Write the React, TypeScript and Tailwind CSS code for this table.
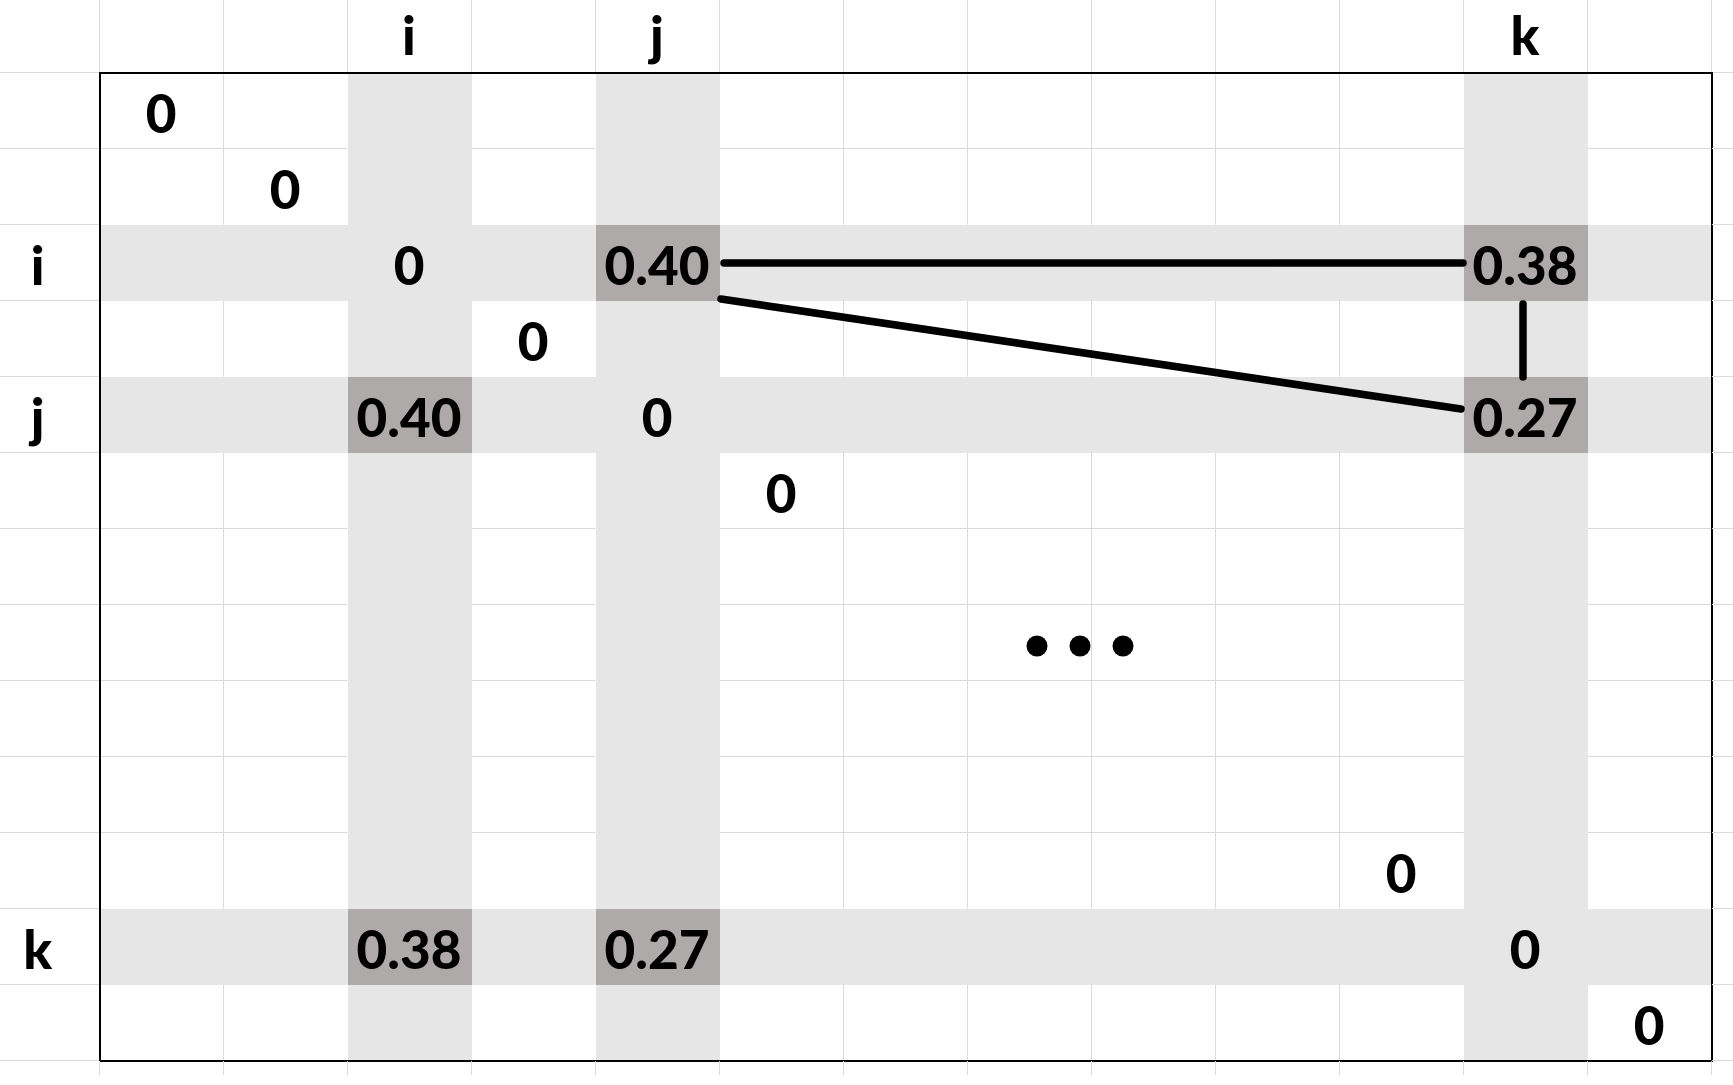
import React from 'react'

const N = 13
const idx = Array.from({ length: N }, (_, i) => i)
const marked = [2, 4, 11]
const names: Record<number, string> = { 2: 'i', 4: 'j', 11: 'k' }
const diag = [0, 1, 2, 3, 4, 5, 10, 11, 12]
const pairs: Record<string, string> = {
  '2-4': '0.40',
  '2-11': '0.38',
  '4-2': '0.40',
  '4-11': '0.27',
  '11-2': '0.38',
  '11-4': '0.27',
}

type Fill = 'none' | 'light' | 'dark'

const fillOf = (r: number, c: number): Fill => {
  if (pairs[`${r}-${c}`]) return 'dark'
  if (marked.includes(r) || marked.includes(c)) return 'light'
  return 'none'
}

const bgClass: Record<Fill, string> = {
  none: 'bg-white',
  light: 'bg-[#e6e6e6]',
  dark: 'bg-[#aeaaaa]',
}

const Cell = ({ r, c }: { r: number; c: number }) => {
  const f = fillOf(r, c)
  const lineRight = c < N - 1 && f === 'none' && fillOf(r, c + 1) === 'none'
  const lineBottom = r < N - 1 && f === 'none' && fillOf(r + 1, c) === 'none'
  const text = pairs[`${r}-${c}`] ?? (r === c && diag.includes(r) ? '0' : '')
  return (
    <div
      className={`flex items-center justify-center pt-[3px] border-r border-b ${bgClass[f]} ${
        lineRight ? 'border-r-[#dadada]' : 'border-r-transparent'
      } ${lineBottom ? 'border-b-[#dadada]' : 'border-b-transparent'}`}
    >
      {text}
    </div>
  )
}

const Links = () => (
  <svg className="absolute inset-0 pointer-events-none" width={1733} height={1085} viewBox="0 0 1733 1085">
    <g stroke="#000" strokeWidth={7.5} strokeLinecap="round">
      <line x1={724} y1={263} x2={1463} y2={263} />
      <line x1={721} y1={299} x2={1461} y2={409} />
      <line x1={1523} y1={304} x2={1523} y2={377} />
    </g>
    <g fill="#000">
      <circle cx={1037} cy={646} r={10.5} />
      <circle cx={1080} cy={646} r={10.5} />
      <circle cx={1123} cy={646} r={10.5} />
    </g>
  </svg>
)

export default function App() {
  return (
    <div className="relative w-[1733px] h-[1085px] overflow-hidden bg-white text-black font-['Lato','Noto_Sans',sans-serif] font-black text-[53px] leading-none">
      <div className="grid grid-cols-[99.5px_1612px_1fr] grid-rows-[73px_988px_14px]">
        {/* corner */}
        <div className="border-r border-b border-[#dadada]" />

        {/* column labels */}
        <div className="grid grid-cols-[repeat(13,124px)]">
          {idx.map((c) => (
            <div key={c} className="flex items-center justify-center pb-[4px] border-r border-[#dadada]">
              {names[c] ?? ''}
            </div>
          ))}
        </div>

        <div className="border-b border-[#dadada]" />

        {/* row labels */}
        <div className="grid grid-rows-[repeat(13,76px)]">
          {idx.map((r) => (
            <div key={r} className="flex items-center justify-center pr-[24px] pt-[3px] border-b border-[#dadada]">
              {names[r] ?? ''}
            </div>
          ))}
        </div>

        {/* matrix */}
        <div className="grid grid-cols-[repeat(13,124px)] grid-rows-[repeat(13,76px)] outline-2 outline-black -outline-offset-1">
          {idx.map((r) => idx.map((c) => <Cell key={`${r}-${c}`} r={r} c={c} />))}
        </div>

        {/* right strip */}
        <div className="grid grid-rows-[repeat(13,76px)]">
          {idx.map((r) => (
            <div key={r} className="border-b border-[#dadada]" />
          ))}
        </div>

        {/* bottom strip */}
        <div className="border-r border-[#dadada]" />
        <div className="grid grid-cols-[repeat(13,124px)]">
          {idx.map((c) => (
            <div key={c} className="border-r border-[#dadada]" />
          ))}
        </div>
        <div />
      </div>
      <Links />
    </div>
  )
}
